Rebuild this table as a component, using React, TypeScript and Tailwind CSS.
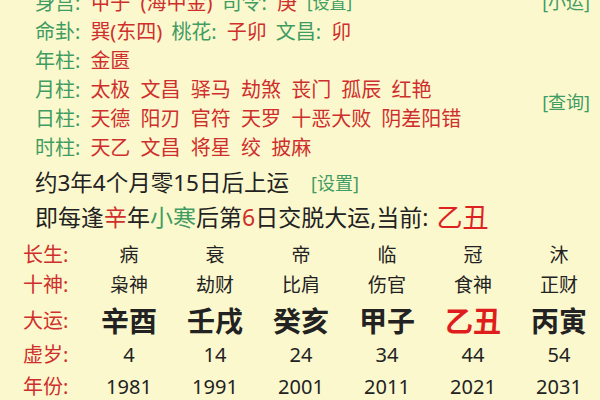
const G = "text-[#3f9c62]";
const R = "text-[#cf2f2c]";

function Line({ label, children }: { label: string; children: React.ReactNode }) {
  return (
    <div className="h-[29px] flex items-center whitespace-nowrap">
      <span className={G}>{label}:</span>
      <span className={`${R} ml-[10px]`}>{children}</span>
    </div>
  );
}

const cols = [
  { cs: "病", ss: "枭神", dy: "辛酉", age: "4", year: "1981" },
  { cs: "衰", ss: "劫财", dy: "壬戌", age: "14", year: "1991" },
  { cs: "帝", ss: "比肩", dy: "癸亥", age: "24", year: "2001" },
  { cs: "临", ss: "伤官", dy: "甲子", age: "34", year: "2011" },
  { cs: "冠", ss: "食神", dy: "乙丑", age: "44", year: "2021", cur: true },
  { cs: "沐", ss: "正财", dy: "丙寅", age: "54", year: "2031" },
];

function Row({ label, h, children }: { label: string; h: string; children: React.ReactNode }) {
  return (
    <div className={`grid grid-cols-[63px_repeat(6,86px)] items-center ${h}`}>
      <div className={`${R} text-[20px] text-left`}>{label}:</div>
      {children}
    </div>
  );
}

export default function App() {
  return (
    <div
      className="w-[600px] h-[400px] overflow-hidden bg-[#fcf8ce] text-[#222]"
      style={{ fontFamily: '"Noto Sans", "Noto Sans CJK SC", sans-serif' }}
    >
      <div className="flex justify-between pl-[35px] pr-[10px] mt-[-12px] text-[20px] [word-spacing:5px]">
        <div>
          <div className="h-[29px] flex items-center whitespace-nowrap">
            <span className={G}>身宫:</span>
            <span className={`${R} ml-[10px]`}>甲子 (海中金)</span>
            <span className={`${G} ml-[9px]`}>司令:</span>
            <span className={`${R} ml-[10px]`}>庚</span>
            <span className={`${G} ml-[10px] text-[17px]`}>[设置]</span>
          </div>
          <div className="h-[29px] flex items-center whitespace-nowrap">
            <span className={G}>命卦:</span>
            <span className={`${R} ml-[10px]`}>巽(东四)</span>
            <span className={`${G} ml-[9px]`}>桃花:</span>
            <span className={`${R} ml-[10px]`}>子卯</span>
            <span className={`${G} ml-[9px]`}>文昌:</span>
            <span className={`${R} ml-[10px]`}>卯</span>
          </div>
          <Line label="年柱">金匮</Line>
          <Line label="月柱">太极 文昌 驿马 劫煞 丧门 孤辰 红艳</Line>
          <Line label="日柱">天德 阳刃 官符 天罗 十恶大败 阴差阳错</Line>
          <Line label="时柱">天乙 文昌 将星 绞 披麻</Line>
        </div>
        <div className="flex flex-col items-end text-[18px]">
          <div className={`${G} h-[29px] flex items-center`}>[小运]</div>
          <div className={`${G} mt-[72px]`}>[查询]</div>
        </div>
      </div>

      <div className="pl-[35px] whitespace-nowrap">
        <div className="h-[34px] mt-[4px] flex items-center text-[22.5px]">
          <span>约3年4个月零15日后上运</span>
          <span className={`${G} text-[18px] ml-[22px]`}>[设置]</span>
        </div>
        <div className="h-[34px] flex items-center text-[23px]">
          <span>即每逢</span>
          <span className={R}>辛</span>
          <span>年</span>
          <span className={G}>小寒</span>
          <span>后第</span>
          <span className={R}>6</span>
          <span>日交脱大运,当前:</span>
          <span className="text-[#dd2222] text-[26px] ml-[8px]">乙丑</span>
        </div>
      </div>

      <div className="pl-[23px] mt-[6px] text-center">
        <Row label="长生" h="h-[30px]">
          {cols.map((c) => (
            <div key={c.cs} className="text-[19px]">{c.cs}</div>
          ))}
        </Row>
        <Row label="十神" h="h-[30px]">
          {cols.map((c) => (
            <div key={c.ss} className="text-[19px]">{c.ss}</div>
          ))}
        </Row>
        <Row label="大运" h="h-[38px]">
          {cols.map((c) => (
            <div key={c.dy} className={`text-[28px] font-bold ${c.cur ? "text-[#e01d1d]" : ""}`}>
              {c.dy}
            </div>
          ))}
        </Row>
        <Row label="虚岁" h="h-[34px]">
          {cols.map((c) => (
            <div key={c.age} className="text-[20px]">{c.age}</div>
          ))}
        </Row>
        <Row label="年份" h="h-[26px]">
          {cols.map((c) => (
            <div key={c.year} className="text-[20px]">{c.year}</div>
          ))}
        </Row>
      </div>
    </div>
  );
}
